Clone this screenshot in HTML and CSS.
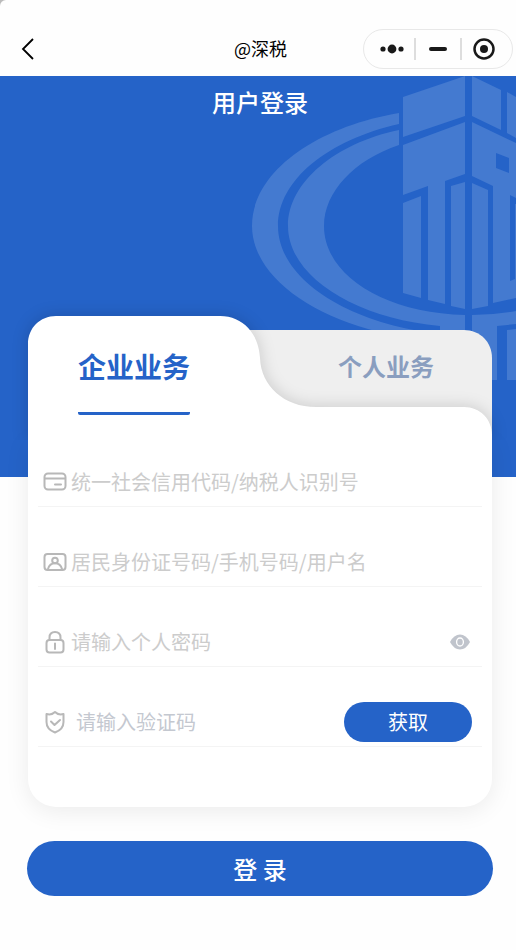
FILE: index.html
```html
<!DOCTYPE html>
<html lang="zh-CN">

<head>
    <meta charset="utf-8">
    <meta name="viewport" content="width=device-width, initial-scale=1">
    <title>@深税</title>
    <link rel="stylesheet" href="styles.css">
</head>

<body>
<div class="page">
    <header class="navbar">
        <button class="back" type="button" aria-label="返回">
            <svg width="14" height="22" viewBox="0 0 14 22"><path d="M13 1L3 11l10 10" fill="none" stroke="#000" stroke-width="1.800"/></svg>
        </button>
        <div class="navbar-title">@深税</div>
        <div class="capsule">
            <button type="button" aria-label="更多">
                <svg width="24" height="10" viewBox="0 0 24 10" fill="#191919"><circle cx="3" cy="5" r="2.6"/><circle cx="12" cy="5" r="4.4"/><circle cx="21" cy="5" r="2.6"/></svg>
            </button>
            <button type="button" aria-label="最小化">
                <svg width="18" height="4" viewBox="0 0 18 4"><rect width="18" height="4" rx="2" fill="#191919"/></svg>
            </button>
            <button type="button" aria-label="关闭">
                <svg width="22" height="22" viewBox="0 0 22 22"><circle cx="11" cy="11" r="9.5" fill="none" stroke="#191919" stroke-width="2.5"/><circle cx="11" cy="11" r="4" fill="#191919"/></svg>
            </button>
        </div>
    </header>

    <div class="hero">
        <!-- tax bureau emblem -->
        <svg class="emblem" width="268" height="304" viewBox="248 76 268 304" fill="#447ad0">
            <path d="M399 113C316 127 252 172 252 226C252 270 300 310 368 329Q400 339 440 341V334C350 324 278 280 278 226C278 180 328 140 399 124Z"/>
            <path d="M399 130C336 143 288 182 288 226C288 276 354 318 440 326V380H465V315C384 313 324 275 324 226C324 192 354 160 399 145Z"/>
            <path d="M472 315Q495 315 516 311V324L497 326V380H472ZM507 330L516 329V380H507Z"/>
            <path d="M403 97L465 76V116L403 137ZM472 76L501 90V130L472 116ZM507 92L516 97V138L507 133Z"/>
            <path d="M403 145L465 122V174L445 181V304L428 300V186L403 195Z"/>
            <path d="M403 203L421 196V298L403 293ZM451 186L465 182V309L451 306ZM472 183L488 190V306L472 309Z"/>
            <path fill-rule="evenodd" d="M472 122L516 143V198L510 195V281L515 279V204H516V298L493 303V186L472 176ZM496 153L509 158V173L496 168Z"/>
        </svg>
        <h1>用户登录</h1>
    </div>

    <main>
        <form class="card">
            <div class="tabs">
                <svg class="tabs-shape" viewBox="0 0 464 124" preserveAspectRatio="none">
                    <path d="M190 14H436C452 14 464 26 464 42V124H190Z" fill="#efefef"/>
                    <path class="tabs-front" d="M0 125V28C0 12 12 0 28 0H192C215 0 231 18 232 42C233 70 256 91 288 91H436C452 91 464 103 464 119V125Z" fill="#fff"/>
                </svg>
                <button class="tab active" type="button">企业业务</button>
                <button class="tab" type="button">个人业务</button>
            </div>

            <div class="fields">
                <div class="field">
                    <label for="taxno" aria-label="纳税人识别号">
                        <svg width="24" height="24" viewBox="0 0 24 24"><rect x="1.500" y="3.500" width="21" height="16" rx="3.500"/><path d="M2 8.500H22M12 14.500H18"/></svg>
                    </label>
                    <input id="taxno" type="text" placeholder="统一社会信用代码/纳税人识别号">
                </div>
                <div class="field">
                    <label for="user" aria-label="用户名">
                        <svg width="24" height="24" viewBox="0 0 24 24"><rect x="1.500" y="4" width="21" height="16" rx="3"/><circle cx="12" cy="10.500" r="2.800"/><path d="M5 19C6 15.500 8.500 13.300 12 13.300S18 15.500 19 19"/></svg>
                    </label>
                    <input id="user" type="text" placeholder="居民身份证号码/手机号码/用户名">
                </div>
                <div class="field">
                    <label for="password" aria-label="密码">
                        <svg width="24" height="24" viewBox="0 0 24 24"><rect x="3.500" y="10" width="17" height="12.500" rx="3"/><path d="M6.500 10V7.500C6.500 4 8.500 2 12 2S17.500 4 17.500 7.500V10M12 13.500V19"/></svg>
                    </label>
                    <input id="password" type="password" placeholder="请输入个人密码">
                    <button class="eye" type="button" aria-label="显示密码">
                        <svg width="20" height="16" viewBox="0 0 20 16"><path d="M0 8Q4 .5 10 .5T20 8Q16 15.500 10 15.500T0 8Z" fill="#c0c4cc"/><ellipse cx="10" cy="8" rx="3.400" ry="4" fill="none" stroke="#fff" stroke-width="1.300"/></svg>
                    </button>
                </div>
                <div class="field captcha">
                    <label for="code" aria-label="验证码">
                        <svg width="24" height="24" viewBox="0 0 24 24"><path d="M12 2C10 4 7 5 3.500 4V12C3.500 18 6.500 20.500 12 22.500C17.500 20.500 20.500 18 20.500 12V4C17 5 14 4 12 2ZM8 11.500L11.500 15L17 10"/></svg>
                    </label>
                    <input id="code" type="text" placeholder="请输入验证码">
                    <button class="get-code" type="button">获取</button>
                </div>
            </div>
        </form>
        <button class="login" type="button">登 录</button>
    </main>
</div>
</body>

</html>
```

FILE: styles.css
```css
* {
  box-sizing: border-box;
}

body {
  margin: 0;
  background: #bbb;
  font-family: "Noto Sans CJK SC", sans-serif;
}

button {
  padding: 0;
  border: 0;
  background: none;
  font-family: inherit;
  cursor: pointer;
}

svg {
  display: block;
}

.page {
  min-height: 100vh;
  background: #fefefe;
  border-top-left-radius: 6px;
  overflow: hidden;
}

/* Top bar */
.navbar {
  display: grid;
  grid-template-columns: 1fr auto 1fr;
  align-items: center;
  height: 76px;
  padding: 22px 3px 0 8px;
}

.back {
  justify-self: start;
  padding: 0 12px;
}

.navbar-title {
  font-size: 18px;
  line-height: 24px;
  padding-bottom: 2px;
  color: #000;
}

.capsule {
  justify-self: end;
  display: flex;
  align-items: center;
  width: 150px;
  height: 40px;
  border: 1px solid #e8e8e8;
  border-radius: 20px;
}

.capsule button {
  flex: 1;
  display: flex;
  align-items: center;
  justify-content: center;
  height: 22px;
}

.capsule button:first-child {
  padding-left: 6px;
}

.capsule button:last-child {
  padding-right: 6px;
}

.capsule button + button {
  border-left: 2px solid #ddd;
}

/* Blue banner */
.hero {
  position: relative;
  height: 401px;
  background: #2563c8;
}

.emblem {
  position: absolute;
  top: 0;
  right: 0;
}

.hero h1 {
  position: relative;
  margin: 0;
  padding-top: 8px;
  padding-left: 4px;
  font-size: 24px;
  font-weight: 500;
  line-height: 36px;
  text-align: center;
  color: #fff;
}

main {
  position: relative;
  margin-top: -161px;
  padding: 0 23px 48px 27px;
}

.card {
  margin: 0 1px;
}

/* Tabs */
.tabs {
  position: relative;
  display: grid;
  grid-template-columns: 1fr 1fr;
  align-items: start;
  height: 124px;
}

.tabs-shape {
  position: absolute;
  top: 0;
  left: 0;
  width: 100%;
  height: 124px;
  overflow: visible;
  clip-path: inset(-30px -18px 0);
}

.tabs-front {
  filter: drop-shadow(0 0 8px rgba(0, 0, 0, .16));
}

.tab {
  position: relative;
  justify-self: center;
  height: 99px;
  font-size: 24px;
  font-weight: 700;
  color: #8a9ebf;
}

.tab + .tab {
  margin-left: 20px;
}

.tab.active {
  margin-right: 20px;
  padding-top: 4px;
  border-bottom: 3px solid #2563c8;
  border-radius: 2px;
  font-size: 28px;
  color: #2563c8;
}

/* Card body */
.fields {
  display: flex;
  flex-direction: column;
  gap: 32px;
  padding: 19px 10px 60px;
  background: #fff;
  border-radius: 0 0 28px 28px;
  box-shadow: 0 4px 24px rgba(0, 0, 0, .08);
}

.field {
  display: flex;
  align-items: center;
  gap: 4px;
  height: 48px;
  padding: 0 10px 2px 5px;
  border-bottom: 1px solid #f4f4f4;
}

.field label svg {
  fill: none;
  stroke: #b8b8b8;
  stroke-width: 2;
  stroke-linecap: round;
  stroke-linejoin: round;
}

.field input {
  flex: 1;
  min-width: 0;
  padding: 0;
  border: 0;
  outline: 0;
  background: none;
  font-family: inherit;
  font-size: 20px;
  color: #333;
}

.field input::placeholder {
  color: #ccc;
}

.captcha {
  gap: 9px;
}

.captcha input::placeholder {
  color: #c4c8d0;
}

.eye {
  padding: 0 2px;
}

.get-code {
  width: 128px;
  height: 40px;
  border-radius: 20px;
  background: #2563c8;
  font-size: 20px;
  color: #fff;
}

.login {
  display: block;
  width: 100%;
  height: 55px;
  margin-top: 34px;
  border-radius: 28px;
  background: #2563c8;
  font-size: 24px;
  font-weight: 500;
  color: #fff;
}
```
